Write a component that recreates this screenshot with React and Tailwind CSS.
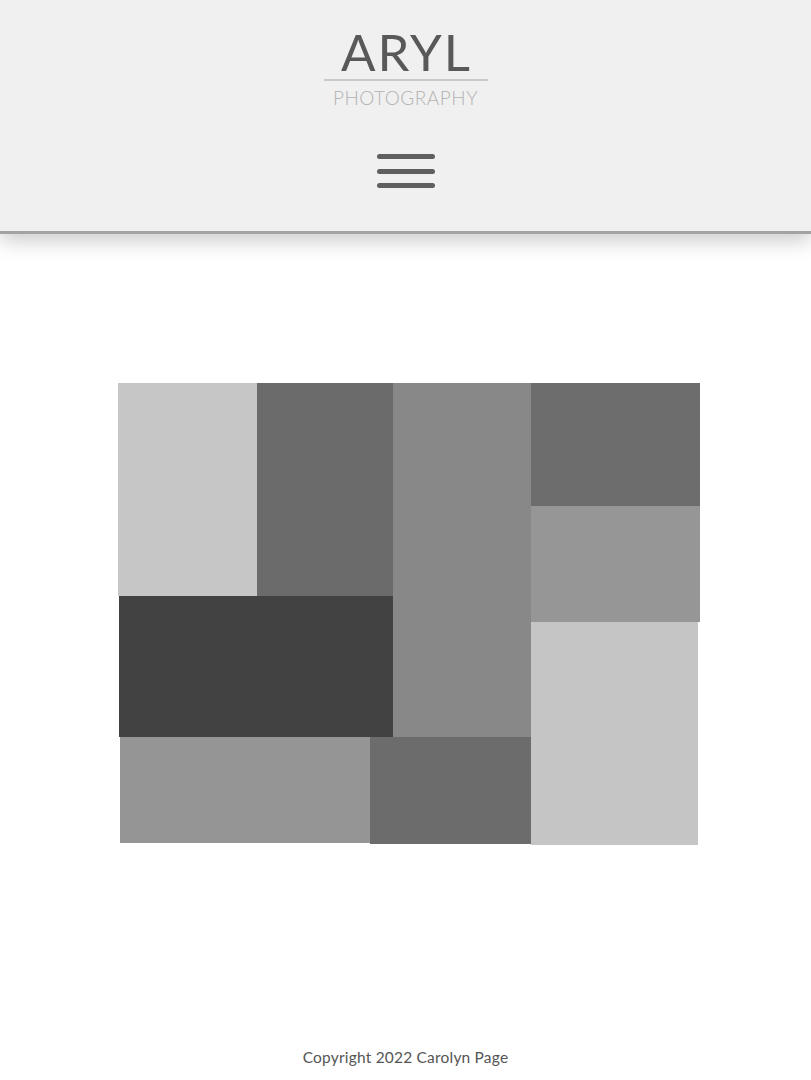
import React from 'react'

const blocks = [
  { cls: "col-start-1 col-span-1 row-start-1 row-span-2 bg-[#c5c6c5]" },
  { cls: "col-start-2 col-span-2 row-start-1 row-span-2 bg-[#6b6b6b]" },
  { cls: "col-start-4 col-span-1 row-start-1 row-span-4 bg-[#888888]" },
  { cls: "col-start-5 col-span-1 row-start-1 row-span-1 bg-[#6d6d6d]" },
  { cls: "col-start-5 col-span-1 row-start-2 row-span-2 bg-[#969696]" },
  { cls: "col-start-5 col-span-1 row-start-4 row-span-2 bg-[#c4c5c4] mr-[2px]" },
  { cls: "col-start-1 col-span-3 row-start-3 row-span-2 bg-[#424242] ml-[1px]" },
  { cls: "col-start-1 col-span-2 row-start-5 row-span-1 bg-[#959595] ml-[2px] mb-[2px]" },
  { cls: "col-start-3 col-span-2 row-start-5 row-span-1 bg-[#6c6c6c] mb-[1px]" },
]

const App = () => {
  return (
    <div className="min-h-screen bg-white flex flex-col font-['Lato','Open_Sans',sans-serif]">
      {/* header */}
      <header className="h-[234px] bg-[#f0f0f0] border-b-[3px] border-[#a3a3a3] shadow-[0_6px_20px_rgba(0,0,0,0.22)] flex flex-col items-center relative z-10">
        <div className="mt-[24px] flex flex-col items-center">
          <h1 className="text-[51px] leading-[56px] tracking-[2px] text-[#595959] font-normal pl-[2px]">ARYL</h1>
          <div className="w-[164px] h-[2px] bg-[#c9c9c9] mt-[-1px]" />
          <p className="text-[19px] leading-[24px] tracking-[0.5px] text-[#b3b3b3] font-light mt-[5px]">PHOTOGRAPHY</p>
        </div>
        <button className="mt-[44px] flex flex-col gap-[9.5px]">
          <span className="block w-[58px] h-[5px] rounded-full bg-[#5f5f5f]" />
          <span className="block w-[58px] h-[5px] rounded-full bg-[#5f5f5f]" />
          <span className="block w-[58px] h-[5px] rounded-full bg-[#5f5f5f]" />
        </button>
      </header>

      {/* gallery */}
      <main className="pt-[149px]">
        <div className="ml-[118px] w-[582px] grid grid-cols-[139px_113px_23px_138px_169px] grid-rows-[123px_90px_26px_115px_108px]">
          {blocks.map((b, i) => (
            <div key={i} className={b.cls} />
          ))}
        </div>
      </main>

      {/* footer */}
      <footer className="mt-[202px] text-center text-[15.5px] tracking-[0.2px] leading-[20px] text-[#555555]">
        Copyright 2022 Carolyn Page
      </footer>
    </div>
  )
}

export default App
